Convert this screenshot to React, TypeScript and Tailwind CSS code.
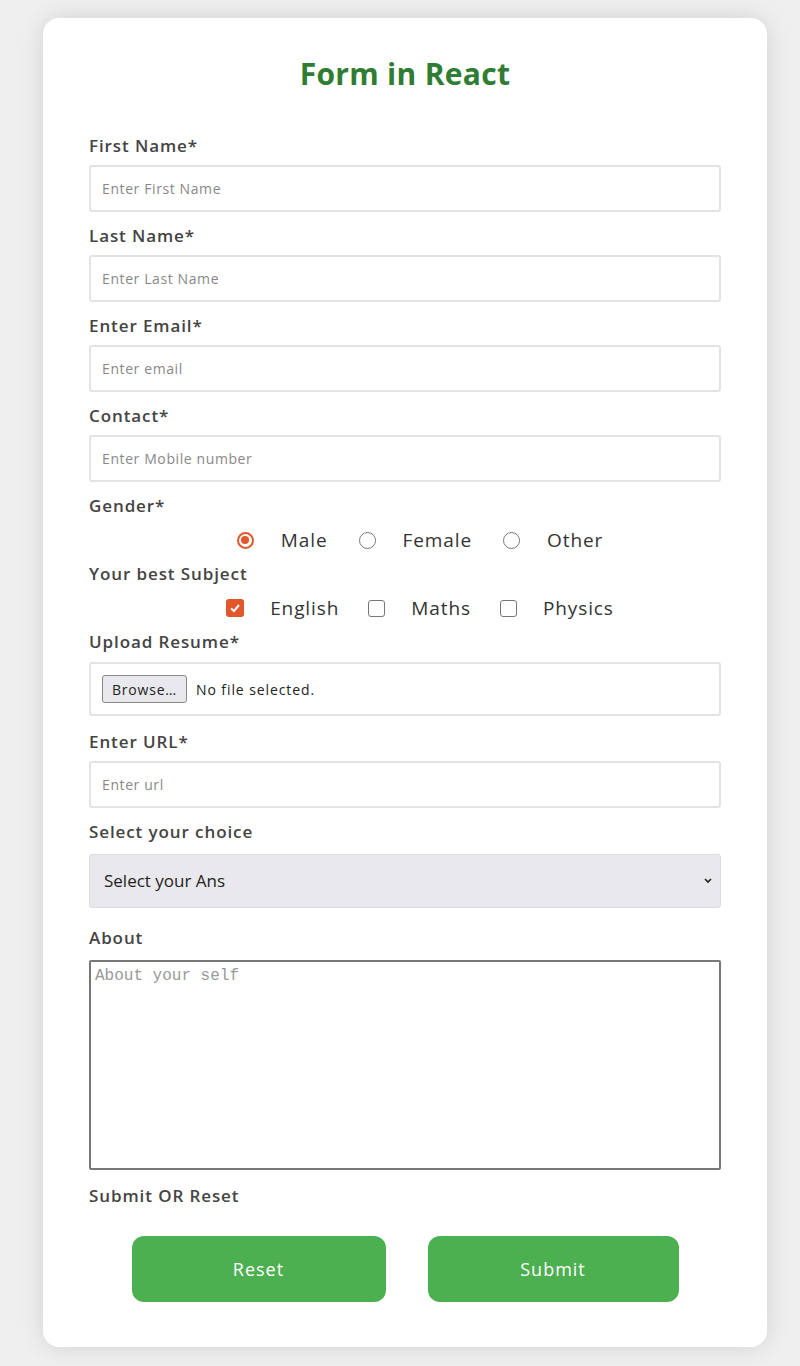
import React, { useState } from "react";

const font = { fontFamily: '"Open Sans", "Noto Sans", Arial, sans-serif' };

const labelCls = "block text-[17px] font-semibold tracking-[0.9px] text-[#444] leading-[20px]";

function Field({ label, placeholder }: { label: string; placeholder: string }) {
  return (
    <div className="mb-[14px]">
      <label className={labelCls + " mb-[9px]"}>{label}</label>
      <input
        placeholder={placeholder}
        className="block w-full h-[47px] border-2 border-[#e3e3e3] rounded-[3px] px-[11px] text-[14px] tracking-[0.6px] text-[#333] placeholder:text-[#888] outline-none bg-white"
      />
    </div>
  );
}

export default function App() {
  const [gender, setGender] = useState("male");
  const [subjects, setSubjects] = useState<string[]>(["english"]);

  const toggle = (s: string) =>
    setSubjects(subjects.includes(s) ? subjects.filter((x) => x !== s) : [...subjects, s]);

  return (
    <div className="min-h-[1366px] bg-[#efefef] pt-[18px] pl-[43px] pr-[33px]" style={font}>
      <div className="bg-white rounded-[16px] shadow-[0_0_24px_rgba(0,0,0,0.12)] h-[1329px] px-[46px] pt-[24px]">
        <h1 className="text-center text-[30px] font-bold text-[#2f7d32] tracking-[0.3px] leading-[64px] mb-[30px]">Form in React</h1>

        <Field label="First Name*" placeholder="Enter First Name" />
        <Field label="Last Name*" placeholder="Enter Last Name" />
        <Field label="Enter Email*" placeholder="Enter email" />
        <Field label="Contact*" placeholder="Enter Mobile number" />

        <label className={labelCls}>Gender*</label>
        <div className="flex justify-center items-center pl-[30px] h-[48px] text-[19px] tracking-[0.9px] text-[#333]">
          {[
            ["male", "Male"],
            ["female", "Female"],
            ["other", "Other"],
          ].map(([v, t]) => (
            <label key={v} className="flex items-center mr-[31px] last:mr-0 cursor-pointer" onClick={() => setGender(v)}>
              {gender === v ? (
                <span className="w-[17px] h-[17px] rounded-full border-2 border-[#e2562b] flex items-center justify-center">
                  <span className="w-[8px] h-[8px] rounded-full bg-[#e2562b]" />
                </span>
              ) : (
                <span className="w-[17px] h-[17px] rounded-full border-[1.5px] border-[#777] bg-white" />
              )}
              <span className="ml-[27px]">{t}</span>
            </label>
          ))}
        </div>

        <label className={labelCls}>Your best Subject</label>
        <div className="flex justify-center items-center pl-[30px] h-[48px] text-[19px] tracking-[0.9px] text-[#333]">
          {[
            ["english", "English"],
            ["maths", "Maths"],
            ["physics", "Physics"],
          ].map(([v, t]) => (
            <label key={v} className="flex items-center mr-[29px] last:mr-0 cursor-pointer" onClick={() => toggle(v)}>
              {subjects.includes(v) ? (
                <span className="w-[18px] h-[18px] rounded-[3px] bg-[#e2562b] flex items-center justify-center">
                  <svg width="12" height="12" viewBox="0 0 12 12">
                    <path d="M2 6.5 L5 9 L10 3" fill="none" stroke="white" strokeWidth="2" />
                  </svg>
                </span>
              ) : (
                <span className="w-[17px] h-[17px] rounded-[3px] border-[1.5px] border-[#777] bg-white" />
              )}
              <span className="ml-[26px]">{t}</span>
            </label>
          ))}
        </div>

        <div className="mb-[16px]">
          <label className={labelCls + " mb-[10px]"}>Upload Resume*</label>
          <div className="flex items-center h-[54px] border-2 border-[#e3e3e3] rounded-[3px] px-[11px]">
            <span className="h-[28px] px-[9px] flex items-center border border-[#888] rounded-[3px] bg-[#e9e9ed] text-[14px] tracking-[0.8px] text-[#222]">
              Browse…
            </span>
            <span className="ml-[9px] text-[14px] tracking-[0.9px] text-[#222]">No file selected.</span>
          </div>
        </div>

        <Field label="Enter URL*" placeholder="Enter url" />

        <div className="mb-[20px]">
          <label className={labelCls + " mb-[12px]"}>Select your choice</label>
          <div className="relative">
            <select className="block w-full h-[54px] appearance-none bg-[#e9e9ed] border border-[#dcdcdc] rounded-[3px] px-[14px] text-[17px] text-[#222] outline-none">
              <option>Select your Ans</option>
              <option>A</option>
              <option>B</option>
            </select>
            <svg className="absolute right-[8px] top-[23px] pointer-events-none" width="10" height="8" viewBox="0 0 10 8">
              <path d="M2 2 L5 5 L8 2" fill="none" stroke="#222" strokeWidth="1.6" />
            </svg>
          </div>
        </div>

        <label className={labelCls + " mb-[12px]"}>About</label>
        <textarea
          placeholder="About your self"
          className="block w-full h-[210px] border-2 border-[#777] rounded-[2px] px-[4px] py-[2px] text-[16px] text-[#333] placeholder:text-[#999] resize-none outline-none"
          style={{ fontFamily: '"Liberation Mono", "DejaVu Sans Mono", monospace' }}
        />

        <label className={labelCls + " mt-[16px]"}>Submit OR Reset</label>
        <div className="flex justify-center gap-[42px] mt-[30px]">
          <button className="w-[254px] h-[66px] rounded-[12px] bg-[#4caf50] text-white text-[18px] tracking-[1px]">Reset</button>
          <button className="w-[251px] h-[66px] rounded-[12px] bg-[#4caf50] text-white text-[18px] tracking-[1px]">Submit</button>
        </div>
      </div>
    </div>
  );
}
